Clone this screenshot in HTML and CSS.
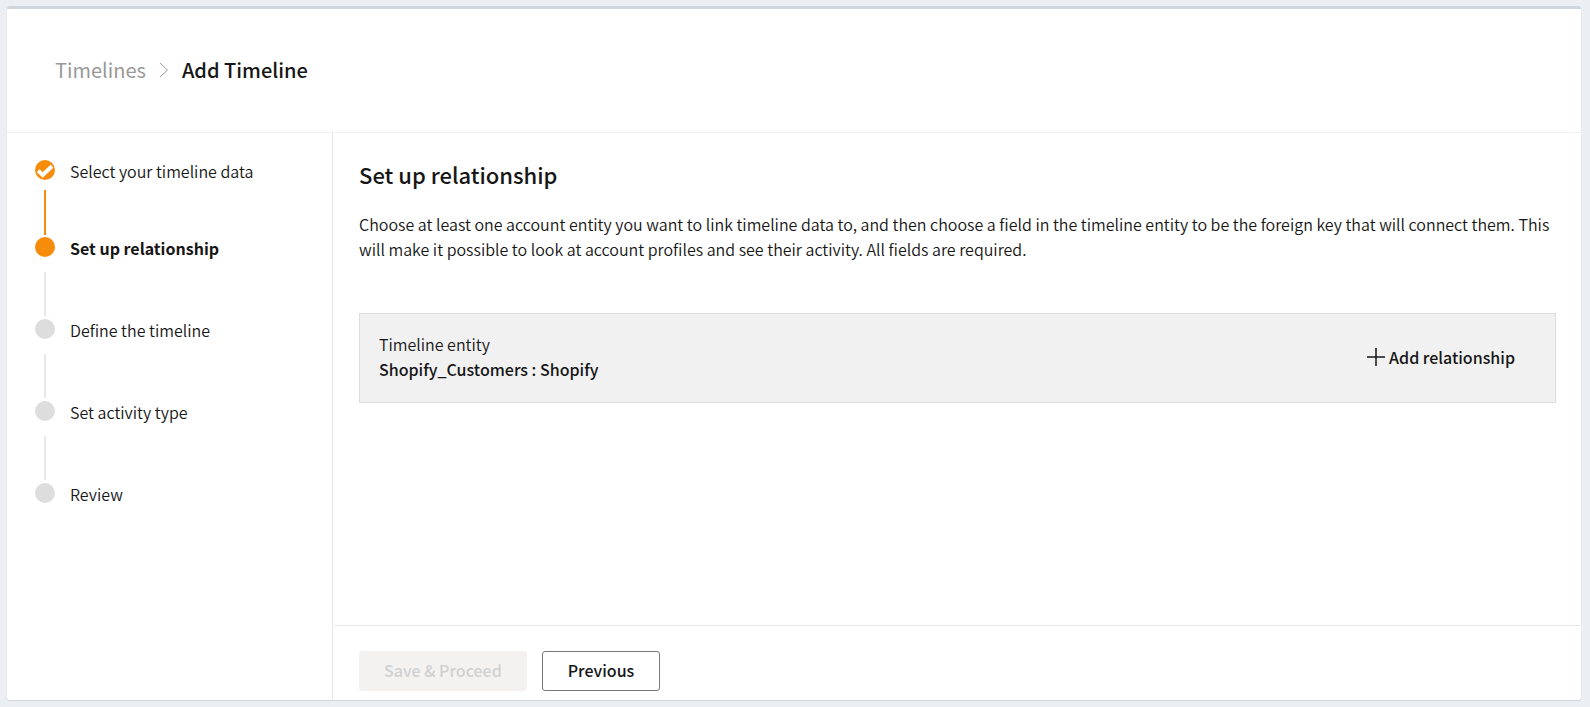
FILE: index.html
```html
<!DOCTYPE html>
<html lang="en">
<head>
<meta charset="utf-8">
<meta name="viewport" content="width=device-width, initial-scale=1">
<title>Add Timeline</title>
<link rel="stylesheet" href="styles.css">
</head>
<body>
<div class="panel">
  <header class="header">
    <nav class="breadcrumb" aria-label="Breadcrumb">
      <a class="crumb-link" href="#">Timelines</a>
      <svg class="crumb-arrow" viewBox="0 0 10 16" aria-hidden="true"><path d="M1 1l7.500 7-7.500 7"/></svg>
      <span class="crumb-current" aria-current="page">Add Timeline</span>
    </nav>
  </header>
  <div class="body">
    <aside class="sidebar">
      <ol class="steps">
        <li class="step step-done">
          <span class="marker"><span class="dot"><svg class="check" viewBox="0 0 20 20" aria-hidden="true"><path d="M3.200 10.600l4.500 4.400L17 6.300"/></svg></span><span class="line"></span></span>
          <span class="step-label">Select your timeline data</span>
        </li>
        <li class="step step-active" aria-current="step">
          <span class="marker"><span class="dot"></span><span class="line"></span></span>
          <span class="step-label">Set up relationship</span>
        </li>
        <li class="step">
          <span class="marker"><span class="dot"></span><span class="line"></span></span>
          <span class="step-label">Define the timeline</span>
        </li>
        <li class="step">
          <span class="marker"><span class="dot"></span><span class="line"></span></span>
          <span class="step-label">Set activity type</span>
        </li>
        <li class="step">
          <span class="marker"><span class="dot"></span></span>
          <span class="step-label">Review</span>
        </li>
      </ol>
    </aside>
    <main class="main">
      <section class="content">
        <h1 class="title">Set up relationship</h1>
        <p class="intro">Choose at least one account entity you want to link timeline data to, and then choose a field in the timeline entity to be the foreign key that will connect them. This will make it possible to look at account profiles and see their activity. All fields are required.</p>
        <div class="entity">
          <div class="entity-text">
            <div class="entity-label">Timeline entity</div>
            <div class="entity-name">Shopify_Customers : Shopify</div>
          </div>
          <button class="add" type="button">
            <svg class="plus" viewBox="0 0 18 18" aria-hidden="true"><path d="M9 0v18M0 9h18"/></svg>
            Add relationship
          </button>
        </div>
      </section>
      <footer class="footer">
        <button class="btn btn-save" type="button" disabled>Save &amp; Proceed</button>
        <button class="btn btn-prev" type="button">Previous</button>
      </footer>
    </main>
  </div>
</div>
</body>
</html>
```
FILE: styles.css
```css
* {
  box-sizing: border-box;
}

body {
  margin: 0;
  padding: 6px 9px 7px 7px;
  min-height: 100vh;
  display: flex;
  background: #ebeef3;
  color: #161616;
  font-family: "Noto Sans CJK SC", "Noto Sans", sans-serif;
  font-size: 16px;
  font-weight: 350;
  line-height: 25px;
}

button {
  font: inherit;
  color: inherit;
  cursor: pointer;
}

.panel {
  flex: 1;
  min-width: 0;
  display: flex;
  flex-direction: column;
  background: #fff;
  border-top: 3px solid #d0d6de;
  border-radius: 3px;
  box-shadow: 0 1px 1px #d0d6dc;
}

.header {
  padding: 46px 48px 47px;
  border-bottom: 1px solid #f1f1f1;
}

.breadcrumb {
  display: flex;
  align-items: center;
  font-size: 20px;
  line-height: 30px;
}

.crumb-link {
  color: #999;
  font-weight: 400;
  text-decoration: none;
}

.crumb-arrow {
  width: 10px;
  height: 16px;
  margin: 0 13px;
  fill: none;
  stroke: #999;
}

.crumb-current {
  font-weight: 500;
}

.body {
  flex: 1;
  display: flex;
}

.sidebar {
  flex: none;
  width: 326px;
  padding: 27px 28px;
  border-right: 1px solid #e8e8e8;
}

.steps {
  margin: 0;
  padding: 0;
  list-style: none;
}

.step {
  display: flex;
  gap: 15px;
  line-height: 23px;
}

.marker {
  display: flex;
  flex-direction: column;
  align-items: center;
}

.dot {
  width: 20px;
  height: 20px;
  border-radius: 50%;
  background: #ddd;
}

.line {
  width: 2px;
  height: 44px;
  margin: 15px 0 3px;
  background: #e8e8e8;
}

.step-done .dot,
.step-active .dot,
.step-done .line {
  background: #f78c0a;
}

.step-done .line {
  height: 45px;
  margin: 10px 0 2px;
}

.check {
  display: block;
  fill: none;
  stroke: #fff;
  stroke-width: 4;
}

.step-active .step-label {
  font-weight: 700;
}

.main {
  flex: 1;
  min-width: 0;
  display: flex;
  flex-direction: column;
}

.content {
  flex: 1;
  padding: 25px 25px 25px 26px;
}

.title {
  margin: 0 0 21px;
  font-size: 22px;
  font-weight: 500;
  line-height: 33px;
}

.intro {
  margin: 0 0 51px;
}

.entity {
  display: flex;
  align-items: center;
  justify-content: space-between;
  padding: 18px 40px 20px 19px;
  background: #f1f1f1;
  border: 1px solid #ddd;
}

.entity-name {
  font-weight: 500;
}

.add {
  display: flex;
  align-items: center;
  gap: 4px;
  padding: 0;
  border: 0;
  background: none;
  font-weight: 500;
}

.plus {
  width: 18px;
  height: 18px;
  fill: none;
  stroke: #161616;
  stroke-width: 1.500;
}

.footer {
  display: flex;
  gap: 15px;
  margin-left: 1px;
  padding: 25px 25px 9px;
  border-top: 1px solid #e8e8e8;
}

.btn {
  height: 40px;
  padding: 0 25px 2px;
  border: 1px solid #777;
  border-radius: 3px;
  background: #fff;
  font-weight: 500;
}

.btn-save {
  padding: 0 24px 2px;
  border-color: #f3f2f1;
  background: #f3f2f1;
  color: #d0d0d0;
}
```
